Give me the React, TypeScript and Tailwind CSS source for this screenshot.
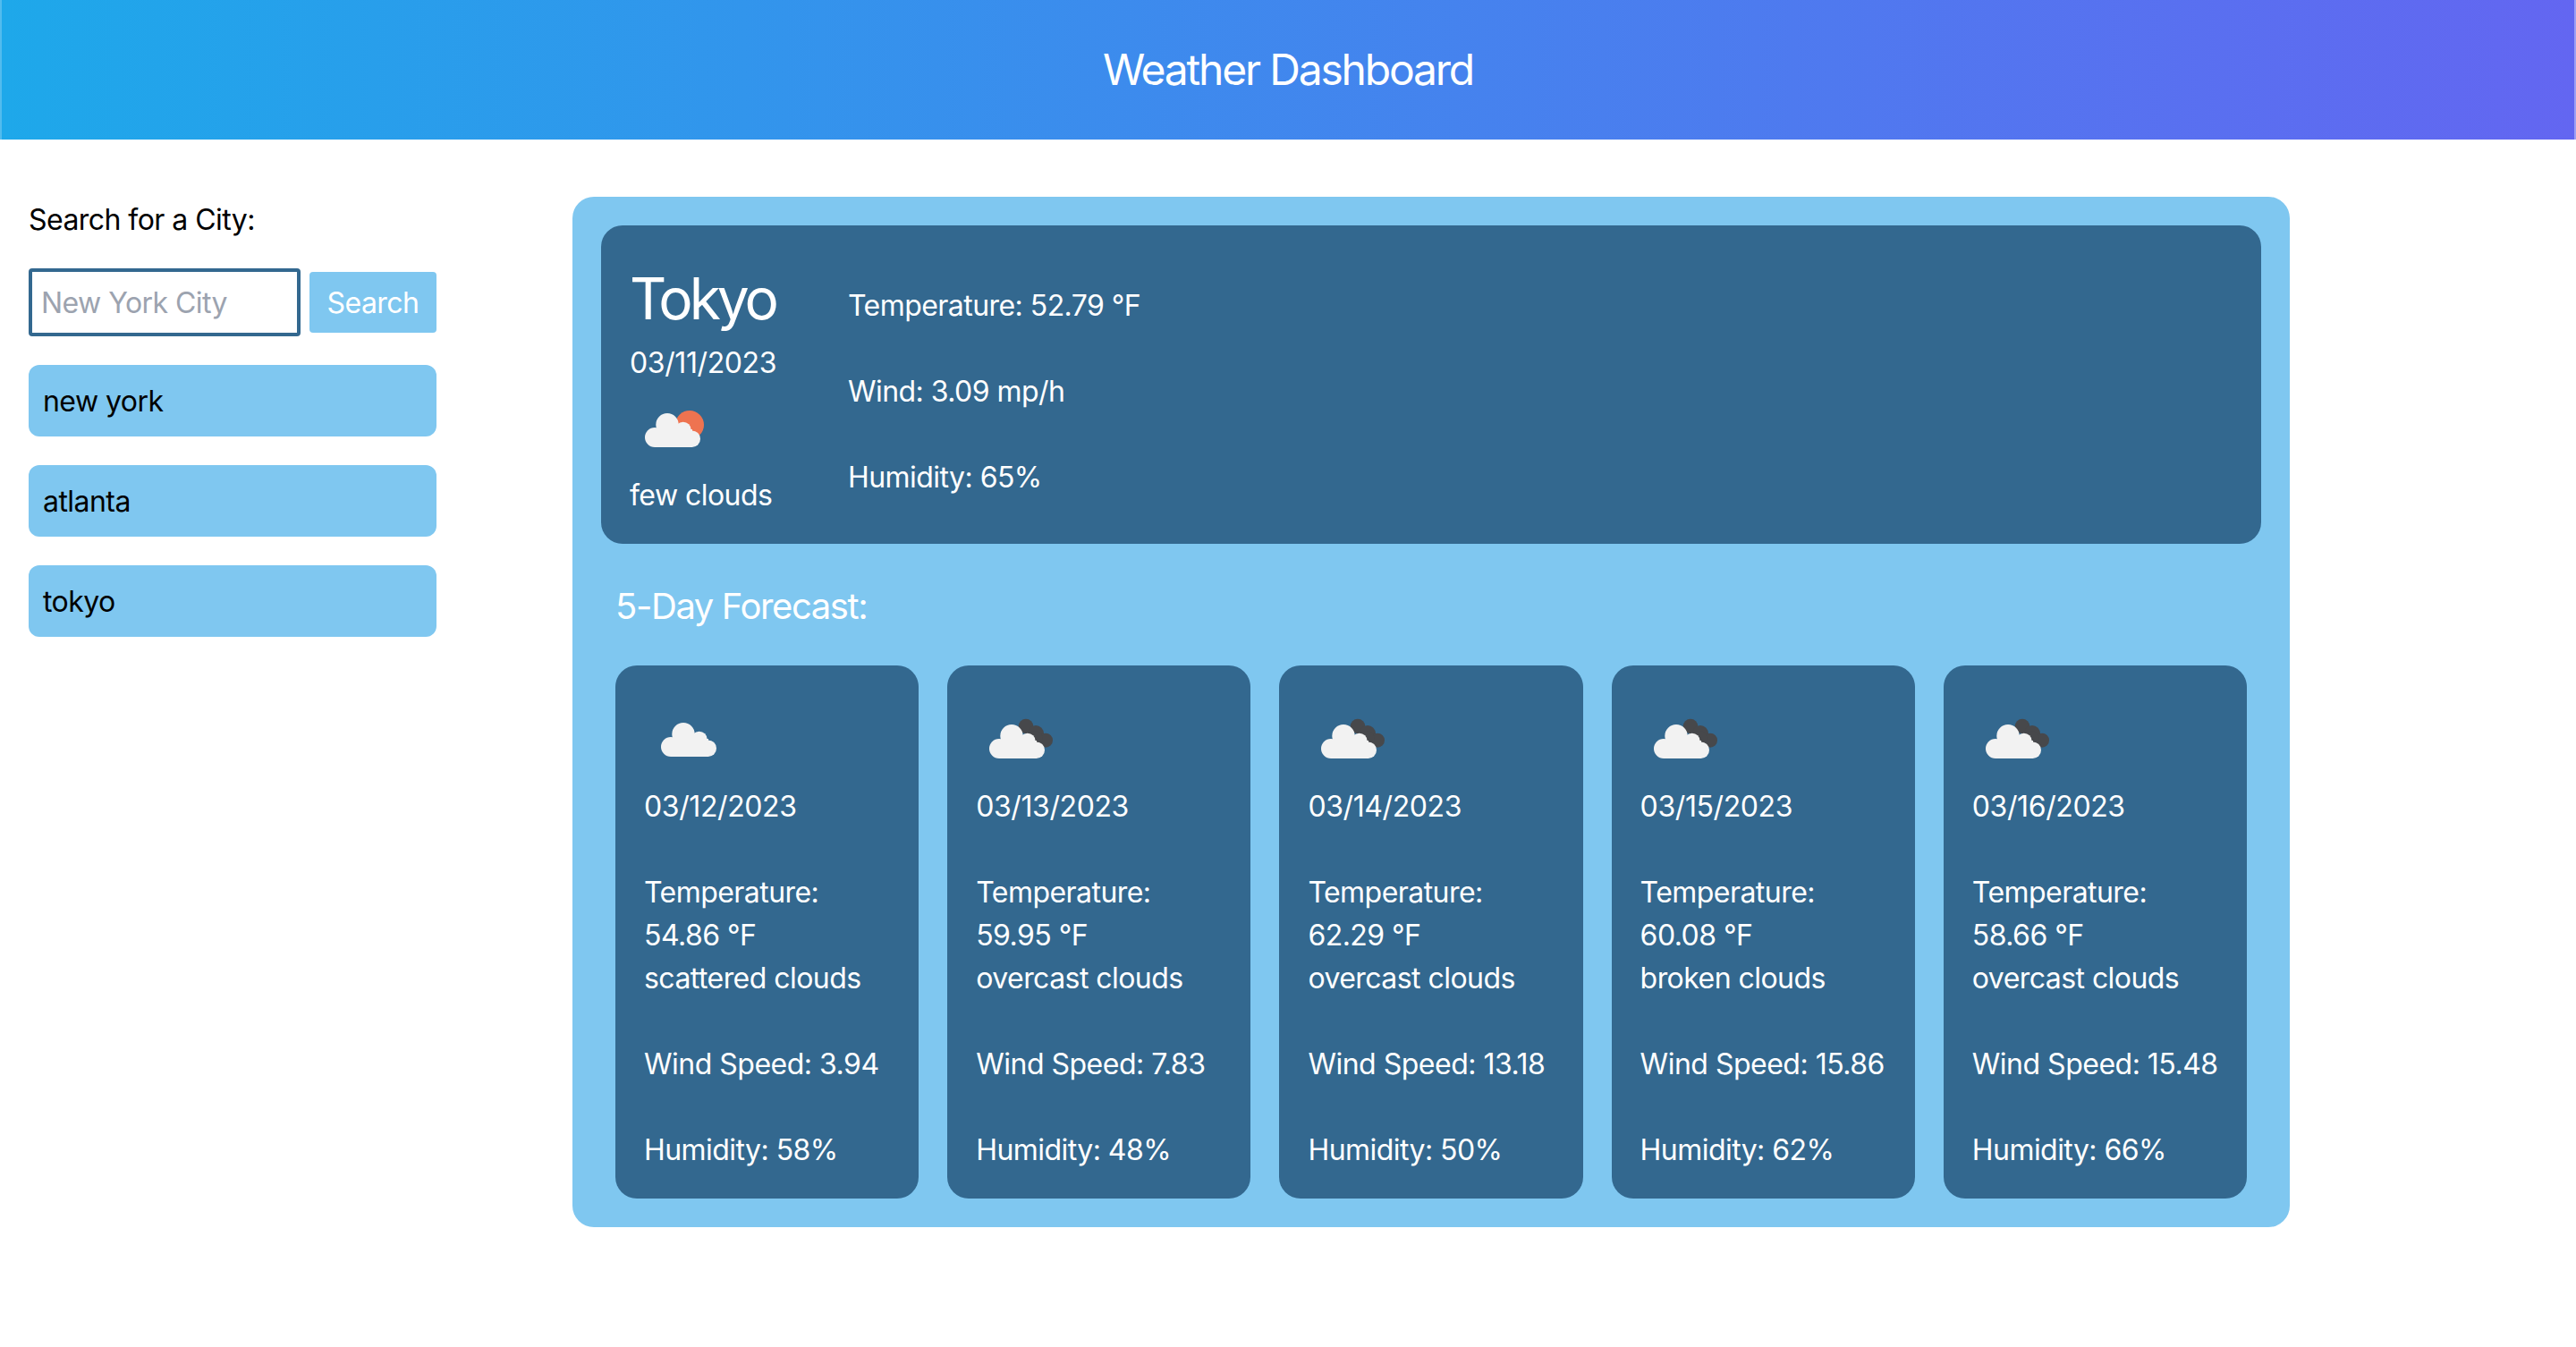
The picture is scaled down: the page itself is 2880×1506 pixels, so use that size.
const FONT = "font-['Inter','Liberation_Sans',sans-serif]";

type Forecast = {
  date: string;
  temp: string;
  desc: string;
  wind: string;
  humidity: string;
  dark: boolean;
};

const FORECAST: Forecast[] = [
  { date: "03/12/2023", temp: "54.86 °F", desc: "scattered clouds", wind: "3.94", humidity: "58%", dark: false },
  { date: "03/13/2023", temp: "59.95 °F", desc: "overcast clouds", wind: "7.83", humidity: "48%", dark: true },
  { date: "03/14/2023", temp: "62.29 °F", desc: "overcast clouds", wind: "13.18", humidity: "50%", dark: true },
  { date: "03/15/2023", temp: "60.08 °F", desc: "broken clouds", wind: "15.86", humidity: "62%", dark: true },
  { date: "03/16/2023", temp: "58.66 °F", desc: "overcast clouds", wind: "15.48", humidity: "66%", dark: true },
];

function CloudShape({ dx, dy }: { dx: number; dy: number }) {
  return (
    <g transform={`translate(${dx} ${dy})`} fill="#f2f2f2">
      <circle cx="44" cy="44.7" r="12.7" />
      <circle cx="61.7" cy="50.7" r="9" />
      <circle cx="30" cy="59" r="11" />
      <circle cx="71.7" cy="60.700" r="9.3" />
      <rect x="30" y="50" width="42" height="20" />
    </g>
  );
}

function WeatherIcon({ kind }: { kind: "sun" | "plain" | "dark" }) {
  return (
    <svg viewBox="0 0 100 100" className="mb-[2px] h-[100px] w-[100px] blur-[0.5px]" aria-hidden="true">
      {kind === "sun" && <circle cx="67" cy="47" r="16" fill="#ee7350" />}
      {kind === "dark" && (
        <g fill="#47484b">
          <circle cx="56" cy="36" r="8.3" />
          <circle cx="67" cy="44" r="9" />
          <circle cx="78" cy="51.7" r="8" />
          <circle cx="66" cy="50" r="9" />
        </g>
      )}
      {kind === "plain" && <CloudShape dx={0} dy={0} />}
      {kind === "dark" && <CloudShape dx={-4} dy={2} />}
      {kind === "sun" && <CloudShape dx={-2} dy={2} />}
    </svg>
  );
}

function ForecastCard({ item }: { item: Forecast }) {
  return (
    <div className="min-w-0 flex-1 whitespace-nowrap rounded-[24px] bg-[#33688f] px-[32px] pb-[30px] pt-[32px] text-white">
      <WeatherIcon kind={item.dark ? "dark" : "plain"} />
      <p className="tracking-[-0.4px]">{item.date}</p>
      <p className="mt-[48px]">Temperature:</p>
      <p>{item.temp}</p>
      <p>{item.desc}</p>
      <p className="mt-[48px] tracking-[-0.5px]">Wind Speed: {item.wind}</p>
      <p className="mt-[48px]">Humidity: {item.humidity}</p>
    </div>
  );
}

export default function App() {
  return (
    <div className={`${FONT} min-h-[1506px] bg-white text-[32px] leading-[48px] tracking-[-0.55px] text-black`}>
      <header className="flex h-[156px] items-center justify-center border-x-2 border-l-[#52bcee] border-r-[#9d9ff5] bg-linear-to-r/srgb from-[#1ea8ea] to-[#6366f1]">
        <h1 className="text-[48px] leading-[72px] tracking-[-2.2px] text-white">Weather Dashboard</h1>
      </header>

      <div className="flex items-start">
        <aside className="w-[640px] shrink-0 pl-[32px] pr-[152px] pt-[66px]">
          <label className="block">Search for a City:</label>
          <div className="mt-[30px] flex items-center gap-[10px]">
            <input
              placeholder="New York City"
              className="h-[76px] w-[304px] rounded-[4px] border-[4px] border-[#33688f] px-[10px] pt-[1px] outline-none placeholder:text-[#9ca3af]"
            />
            <button className="h-[68px] w-[142px] rounded-[4px] bg-[#7fc7f0] pt-[1px] text-white">Search</button>
          </div>
          <div className="mt-[32px] flex flex-col gap-[32px]">
            {["new york", "atlanta", "tokyo"].map((city) => (
              <div key={city} className="flex h-[80px] items-center rounded-[12px] bg-[#7fc7f0] px-[16px] pt-[2px]">
                {city}
              </div>
            ))}
          </div>
        </aside>

        <main className="mt-[64px] w-[1920px] rounded-[24px] bg-[#7fc7f0] p-[32px]">
          <section className="flex h-[356px] rounded-[24px] bg-[#33688f] px-[32px] pt-[34px] text-white">
            <div className="w-[244px] shrink-0">
              <h2 className="text-[64px] leading-[96px] tracking-[-4px]">Tokyo</h2>
              <p className="tracking-[-0.4px]">03/11/2023</p>
              <div className="-mt-[2px]">
                <WeatherIcon kind="sun" />
              </div>
              <p>few clouds</p>
            </div>
            <div className="pt-[32px]">
              <p>Temperature: 52.79 °F</p>
              <p className="mt-[48px]">Wind: 3.09 mp/h</p>
              <p className="mt-[48px]">Humidity: 65%</p>
            </div>
          </section>

          <h3 className="ml-[16px] mt-[40px] text-[40px] leading-[60px] tracking-[-1.4px] text-white">5-Day Forecast:</h3>

          <div className="mx-[16px] mt-[36px] flex gap-[32px]">
            {FORECAST.map((item) => (
              <ForecastCard key={item.date} item={item} />
            ))}
          </div>
        </main>
      </div>
    </div>
  );
}
